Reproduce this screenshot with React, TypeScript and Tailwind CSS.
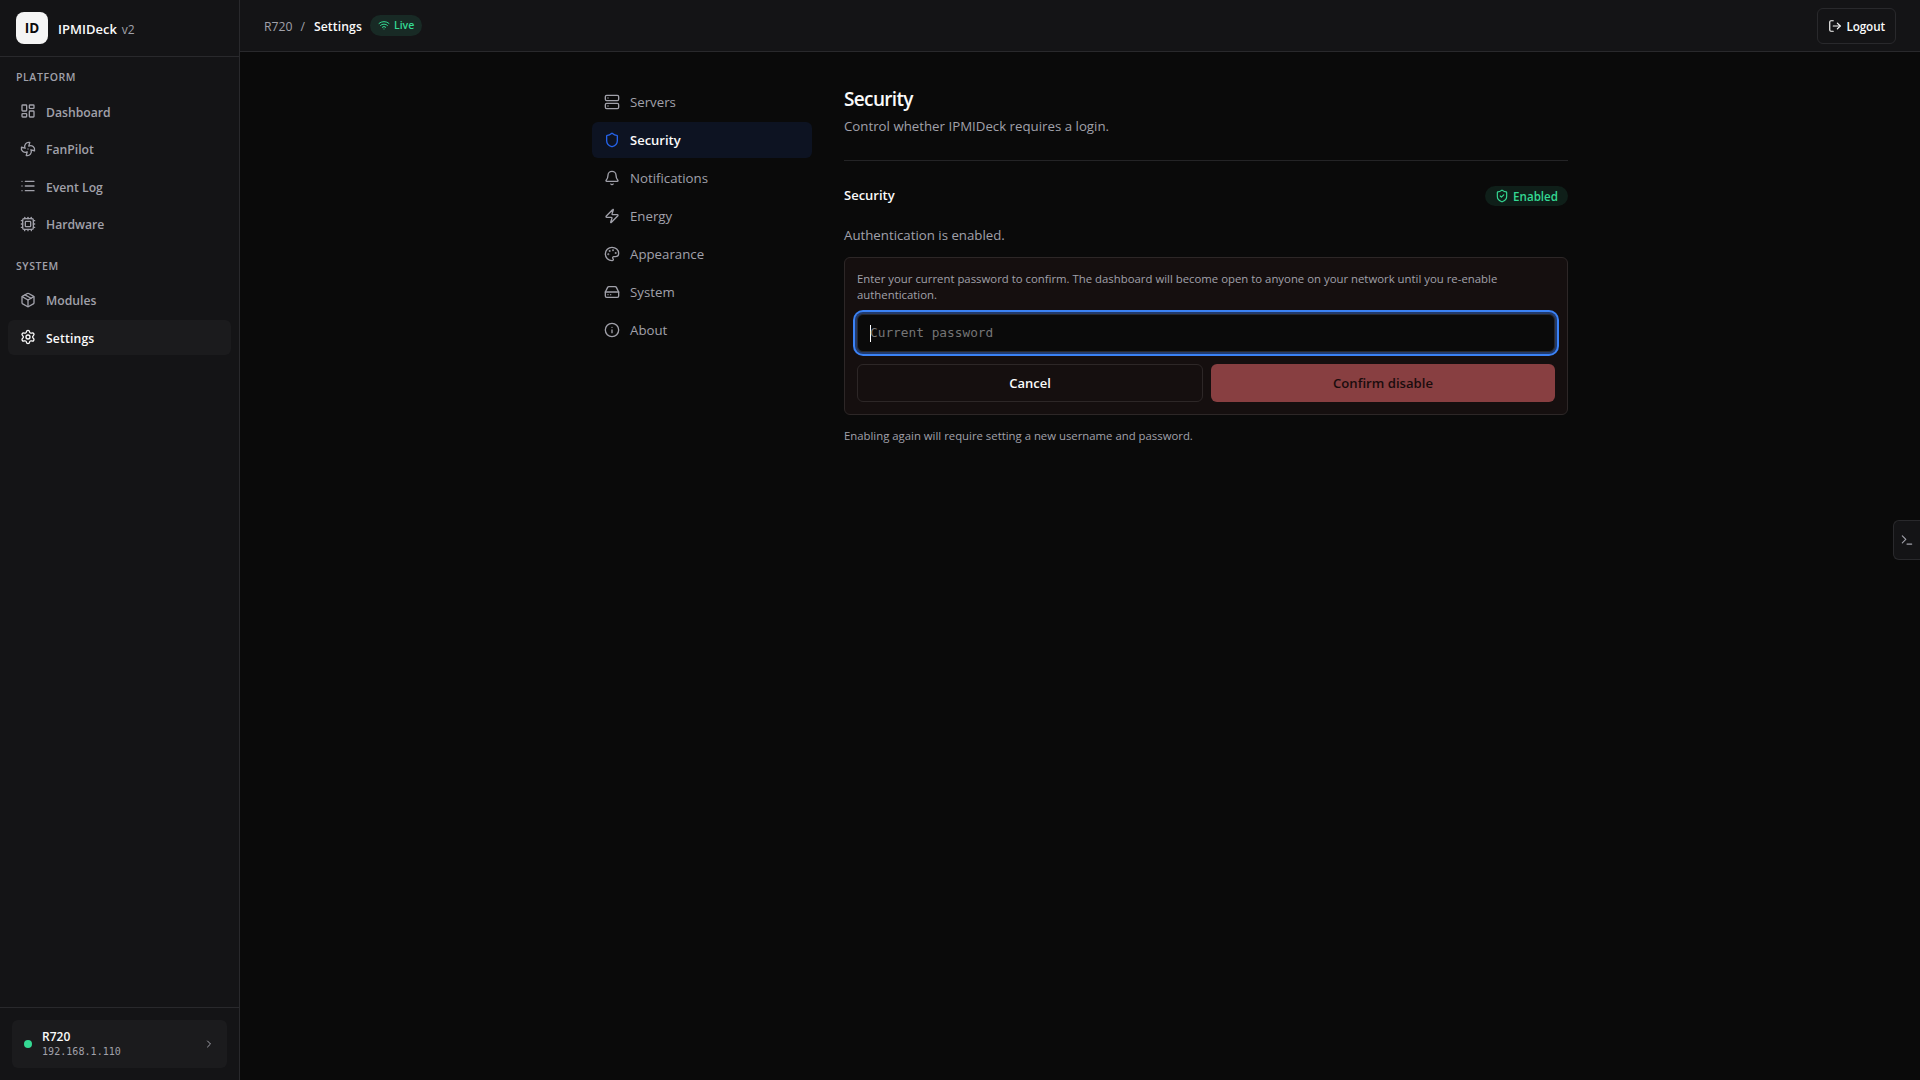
import type { ReactNode } from "react";
import {
  Bell,
  ChevronRight,
  Cpu,
  Fan,
  HardDrive,
  Info,
  LayoutDashboard,
  List,
  LogOut,
  Package,
  Palette,
  Server,
  Settings,
  Shield,
  ShieldCheck,
  Terminal,
  Wifi,
  Zap,
  type LucideIcon,
} from "lucide-react";
import clsx from "clsx";

interface NavEntry {
  label: string;
  icon: LucideIcon;
}

const PLATFORM: NavEntry[] = [
  { label: "Dashboard", icon: LayoutDashboard },
  { label: "FanPilot", icon: Fan },
  { label: "Event Log", icon: List },
  { label: "Hardware", icon: Cpu },
];

const SYSTEM: NavEntry[] = [
  { label: "Modules", icon: Package },
  { label: "Settings", icon: Settings },
];

const SECTIONS: NavEntry[] = [
  { label: "Servers", icon: Server },
  { label: "Security", icon: Shield },
  { label: "Notifications", icon: Bell },
  { label: "Energy", icon: Zap },
  { label: "Appearance", icon: Palette },
  { label: "System", icon: HardDrive },
  { label: "About", icon: Info },
];

export default function App() {
  return (
    <div className="flex h-screen overflow-hidden bg-[#0a0a0a] font-['Open_Sans','Noto_Sans',sans-serif] text-[13px] text-[#fafafa]">
      <Sidebar />
      <div className="relative flex min-w-0 flex-1 flex-col">
        <TopBar />
        <main className="flex-1">
          <div className="mx-auto flex max-w-[1024px] gap-8 px-6 py-8">
            <SectionNav active="Security" />
            <SecurityPanel />
          </div>
        </main>
        <button className="absolute top-[520px] right-0 flex h-10 w-[27px] items-center justify-center rounded-l-md border border-r-0 border-[#29292c] bg-[#141416] text-[#a1a1aa]">
          <Terminal size={14} />
        </button>
      </div>
    </div>
  );
}

// ── Sidebar ─────────────────────────────────────────────

function Sidebar() {
  return (
    <aside className="flex w-60 shrink-0 flex-col border-r border-[#29292c] bg-[#141416]">
      <div className="flex h-[57px] shrink-0 items-center gap-2.5 border-b border-[#29292c] px-4">
        <div className="flex size-8 items-center justify-center rounded-lg bg-[#f5f5f5] pt-px text-[13.5px] font-bold text-[#0a0a0a]">
          ID
        </div>
        <div className="flex items-baseline gap-[5px] pt-[3px]">
          <span className="text-[13px] font-semibold">IPMIDeck</span>
          <span className="text-[12px] text-[#a1a1aa]">v2</span>
        </div>
      </div>

      <nav className="flex-1 px-2 pt-3">
        <NavGroup title="PLATFORM" items={PLATFORM} />
        <div className="h-4" />
        <NavGroup title="SYSTEM" items={SYSTEM} active="Settings" />
      </nav>

      <div className="border-t border-[#29292c] p-3">
        <div className="flex h-12 items-center rounded-md bg-[#1b1b1d] pr-3 pl-3">
          <span className="size-2 rounded-full bg-[#34d993]" />
          <div className="ml-2.5 flex-1">
            <div className="text-[12px] leading-[14px] font-semibold">R720</div>
            <div className="pt-px font-['DejaVu_Sans_Mono',monospace] text-[10px] leading-[14px] tracking-[0.05px] text-[#a1a1aa]">
              192.168.1.110
            </div>
          </div>
          <ChevronRight size={12} className="text-[#a1a1aa]" />
        </div>
      </div>
    </aside>
  );
}

function NavGroup({
  title,
  items,
  active,
}: {
  title: string;
  items: NavEntry[];
  active?: string;
}) {
  return (
    <div>
      <div className="mb-2 px-2 text-[10.5px] leading-[16.5px] font-semibold tracking-[0.6px] text-[#a1a1aa]">
        {title}
      </div>
      <div className="flex flex-col gap-0.5">
        {items.map(({ label, icon: Icon }) => (
          <a
            key={label}
            className={clsx(
              "flex h-[35.5px] items-center gap-2.5 rounded-md px-3 text-[12.2px] font-semibold",
              label === active
                ? "bg-[#1b1b1d] tracking-[0.15px] text-[#fafafa]"
                : "text-[#a1a1aa]",
            )}
          >
            <Icon size={16} />
            <span className="pt-[3px]">{label}</span>
          </a>
        ))}
      </div>
    </div>
  );
}

// ── Top bar ─────────────────────────────────────────────

function TopBar() {
  return (
    <header className="flex h-[52px] shrink-0 items-center justify-between border-b border-[#29292c] bg-[#141416] px-6">
      <div className="flex items-center text-[12.2px]">
        <span className="pt-[3px] text-[#a1a1aa]">R720</span>
        <span className="mx-2 pt-[3px] text-[#a1a1aa]">/</span>
        <span className="pt-[3px] pl-px font-semibold tracking-[0.1px]">Settings</span>
        <span className="ml-2 flex h-[21px] items-center gap-1 rounded-full bg-[#182a25] px-2 text-[10.5px] font-semibold text-[#34d993]">
          <Wifi size={12} />
          Live
        </span>
      </div>
      <button className="flex h-9 items-center gap-1 rounded-md border border-[#29292c] px-2.5 text-[11.7px] font-semibold">
        <LogOut size={14} />
        <span className="pt-[2px] tracking-[-0.1px]">Logout</span>
      </button>
    </header>
  );
}

// ── Settings ────────────────────────────────────────────

function SectionNav({ active }: { active: string }) {
  return (
    <nav className="flex w-[220px] shrink-0 flex-col gap-0.5">
      {SECTIONS.map(({ label, icon: Icon }) => (
        <a
          key={label}
          className={clsx(
            "flex h-9 items-center gap-2.5 rounded-md px-3",
            label === active
              ? "bg-[#0d1322] font-semibold text-[#fafafa]"
              : "text-[13.25px] text-[#a1a1aa]",
          )}
        >
          <Icon size={16} className={clsx(label === active && "text-[#2563eb]")} />
          <span className="pt-px">{label}</span>
        </a>
      ))}
    </nav>
  );
}

function SecurityPanel() {
  return (
    <section className="min-w-0 flex-1">
      <div className="h-[77px] border-b border-[#242426]">
        <h2 className="text-[19px] leading-[30px] font-semibold tracking-[-0.65px]">
          Security
        </h2>
        <p className="mt-0.5 text-[13.27px] leading-5 text-[#a1a1aa]">
          Control whether IPMIDeck requires a login.
        </p>
      </div>

      <div className="mt-6 flex h-[22px] items-center justify-between">
        <h3 className="font-semibold">Security</h3>
        <StatusBadge>Enabled</StatusBadge>
      </div>

      <p className="mt-[18px] text-[13.25px] leading-5 text-[#a1a1aa]">
        Authentication is enabled.
      </p>

      <div className="mt-3 flex flex-col gap-[11px] rounded-md border border-[#2d2727] bg-[#150f0f] p-3 pt-[13px]">
        <p className="text-[11.36px] leading-4 text-[#a1a1aa]">
          Enter your current password to confirm. The dashboard will become open
          to anyone on your network until you re-enable authentication.
        </p>
        <div className="mb-px flex h-[38px] items-center rounded-md border border-[#29292c] bg-[#0a0a0a] px-3 font-['DejaVu_Sans_Mono',monospace] text-[12.8px] text-[#757575] shadow-[0_0_0_2px_#223a6b,0_0_0_4px_#3b82f6]">
          <span className="-mr-px h-[17px] w-px bg-white" />
          Current password
        </div>
        <div className="flex gap-2">
          <button className="h-[38px] flex-1 rounded-md border border-[#2d2727] px-4 pt-px font-semibold">
            Cancel
          </button>
          <button className="h-[38px] flex-1 rounded-md bg-[#883f41] px-4 pt-px text-[13.15px] font-semibold text-[#1a0c0d]">
            Confirm disable
          </button>
        </div>
      </div>

      <p className="mt-[13px] text-[11.35px] leading-4 text-[#a1a1aa]">
        Enabling again will require setting a new username and password.
      </p>
    </section>
  );
}

function StatusBadge({ children }: { children: ReactNode }) {
  return (
    <span className="flex h-5 items-center gap-1 rounded-full bg-[#0f1f19] px-2.5 text-[11.6px] font-semibold text-[#34d993]">
      <ShieldCheck size={14} />
      <span className="pt-px">{children}</span>
    </span>
  );
}
